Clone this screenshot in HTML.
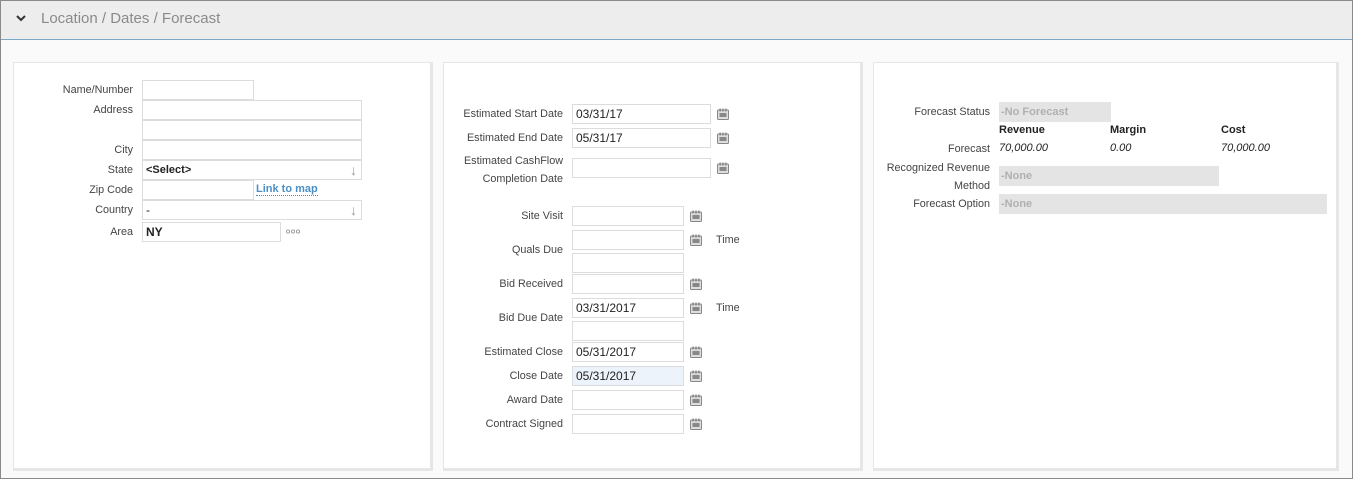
<!DOCTYPE html>
<html><head><style>
*{margin:0;padding:0;box-sizing:border-box}
body{width:1353px;height:479px;background:#fafafa;font-family:"Liberation Sans",sans-serif;font-size:11px;color:#444;position:relative;overflow:hidden}
.frame{position:absolute;left:0;top:0;width:1353px;height:479px;border:1px solid #8a8a8a}
.hdr{position:absolute;left:1px;top:1px;width:1351px;height:39px;background:#ededed;border-bottom:1px solid #7ba8c9}
.hdr .t{position:absolute;left:40px;top:9px;font-size:15px;color:#8a8a8a}
.panel{position:absolute;top:62px;height:409px;background:#fff;border:1px solid #e6e6e6;border-right:3px solid #e6e6e6;border-bottom:3px solid #e6e6e6}
.l{position:absolute;text-align:right;white-space:nowrap;line-height:13px;font-size:10.8px}
.i{position:absolute;height:20px;border:1px solid #dcdcdc;background:#fff;font-size:12px;color:#222;padding:2px 3px;line-height:14px}
.ro{position:absolute;height:20px;background:#e4e4e4;color:#b0b0b0;font-weight:bold;padding:3px 2px;line-height:14px}
.cal{position:absolute;width:12px;height:12px}
.b{position:absolute;font-weight:bold;color:#222}
.it{position:absolute;font-style:italic;color:#222}
.arr{position:absolute;right:4px;top:1px;color:#999;font-weight:normal;font-size:14px;line-height:16px}
</style></head><body>
<div class="hdr"><svg style="position:absolute;left:14px;top:12px" width="12" height="10"><path d="M2 3 L6 7 L10 3" stroke="#333" stroke-width="2" fill="none"/></svg><div class="t">Location / Dates / Forecast</div></div>
<div class="frame"></div>
<div class="panel" style="left:13px;width:420px"></div>
<div class="panel" style="left:443px;width:420px"></div>
<div class="panel" style="left:873px;width:466px"></div>

<!-- left -->
<div class="l" style="right:1220px;top:84px">Name/Number</div>
<div class="i" style="left:142px;top:80px;width:112px"></div>
<div class="l" style="right:1220px;top:104px">Address</div>
<div class="i" style="left:142px;top:100px;width:220px"></div>
<div class="i" style="left:142px;top:120px;width:220px"></div>
<div class="l" style="right:1220px;top:144px">City</div>
<div class="i" style="left:142px;top:140px;width:220px"></div>
<div class="l" style="right:1220px;top:164px">State</div>
<div class="i" style="left:142px;top:160px;width:220px;font-weight:bold;font-size:11px">&lt;Select&gt;<span class="arr">↓</span></div>
<div class="l" style="right:1220px;top:184px">Zip Code</div>
<div class="i" style="left:142px;top:180px;width:112px"></div>
<div style="position:absolute;left:256px;top:183px;color:#4a8fc7;font-weight:bold;border-bottom:1px dotted #4a8fc7;line-height:12px">Link to map</div>
<div class="l" style="right:1220px;top:204px">Country</div>
<div class="i" style="left:142px;top:200px;width:220px">-<span class="arr">↓</span></div>
<div class="l" style="right:1220px;top:226px">Area</div>
<div class="i" style="left:142px;top:222px;width:139px;font-weight:bold">NY</div>
<svg style="position:absolute;left:286px;top:229px" width="14" height="5"><circle cx="2" cy="2.5" r="1.6" fill="none" stroke="#999" stroke-width="0.9"/><circle cx="7" cy="2.5" r="1.6" fill="none" stroke="#999" stroke-width="0.9"/><circle cx="12" cy="2.5" r="1.6" fill="none" stroke="#999" stroke-width="0.9"/></svg>

<!-- middle -->
<div class="l" style="right:790px;top:108px">Estimated Start Date</div>
<div class="i" style="left:572px;top:104px;width:139px">03/31/17</div>
<div class="l" style="right:790px;top:132px">Estimated End Date</div>
<div class="i" style="left:572px;top:128px;width:139px">05/31/17</div>
<div class="l" style="right:790px;top:152px;line-height:18px">Estimated CashFlow<br>Completion Date</div>
<div class="i" style="left:572px;top:158px;width:139px"></div>
<div class="l" style="right:790px;top:210px">Site Visit</div>
<div class="i" style="left:572px;top:206px;width:112px"></div>
<div class="l" style="right:790px;top:244px">Quals Due</div>
<div class="i" style="left:572px;top:230px;width:112px"></div>
<div class="i" style="left:572px;top:253px;width:112px"></div>
<div class="l" style="left:716px;top:234px">Time</div>
<div class="l" style="right:790px;top:278px">Bid Received</div>
<div class="i" style="left:572px;top:274px;width:112px"></div>
<div class="l" style="right:790px;top:312px">Bid Due Date</div>
<div class="i" style="left:572px;top:298px;width:112px">03/31/2017</div>
<div class="i" style="left:572px;top:321px;width:112px"></div>
<div class="l" style="left:716px;top:302px">Time</div>
<div class="l" style="right:790px;top:346px">Estimated Close</div>
<div class="i" style="left:572px;top:342px;width:112px">05/31/2017</div>
<div class="l" style="right:790px;top:370px">Close Date</div>
<div class="i" style="left:572px;top:366px;width:112px;background:#edf3fa">05/31/2017</div>
<div class="l" style="right:790px;top:394px">Award Date</div>
<div class="i" style="left:572px;top:390px;width:112px"></div>
<div class="l" style="right:790px;top:418px">Contract Signed</div>
<div class="i" style="left:572px;top:414px;width:112px"></div>

<svg width="0" height="0" style="position:absolute"><defs><symbol id="c" viewBox="0 0 12 12"><rect x="0.5" y="2" width="11" height="9.5" rx="1" fill="#ddd" stroke="#888"/><rect x="2.5" y="5" width="7" height="4" fill="#888"/><rect x="2.5" y="0.5" width="1.2" height="3" fill="#777"/><rect x="5.4" y="0.5" width="1.2" height="3" fill="#777"/><rect x="8.3" y="0.5" width="1.2" height="3" fill="#777"/></symbol></defs></svg>
<svg class="cal" style="left:717px;top:108px"><use href="#c"/></svg>
<svg class="cal" style="left:717px;top:132px"><use href="#c"/></svg>
<svg class="cal" style="left:717px;top:162px"><use href="#c"/></svg>
<svg class="cal" style="left:690px;top:210px"><use href="#c"/></svg>
<svg class="cal" style="left:690px;top:234px"><use href="#c"/></svg>
<svg class="cal" style="left:690px;top:278px"><use href="#c"/></svg>
<svg class="cal" style="left:690px;top:302px"><use href="#c"/></svg>
<svg class="cal" style="left:690px;top:346px"><use href="#c"/></svg>
<svg class="cal" style="left:690px;top:370px"><use href="#c"/></svg>
<svg class="cal" style="left:690px;top:394px"><use href="#c"/></svg>
<svg class="cal" style="left:690px;top:418px"><use href="#c"/></svg>

<!-- right -->
<div class="l" style="right:363px;top:106px">Forecast Status</div>
<div class="ro" style="left:999px;top:102px;width:112px">-No Forecast</div>
<div class="b" style="left:999px;top:124px">Revenue</div>
<div class="b" style="left:1110px;top:124px">Margin</div>
<div class="b" style="left:1221px;top:124px">Cost</div>
<div class="l" style="right:363px;top:143px">Forecast</div>
<div class="it" style="left:999px;top:142px">70,000.00</div>
<div class="it" style="left:1110px;top:142px">0.00</div>
<div class="it" style="left:1221px;top:142px">70,000.00</div>
<div class="l" style="right:363px;top:159px;line-height:18px">Recognized Revenue<br>Method</div>
<div class="ro" style="left:999px;top:166px;width:220px">-None</div>
<div class="l" style="right:363px;top:198px">Forecast Option</div>
<div class="ro" style="left:999px;top:194px;width:328px">-None</div>
</body></html>
